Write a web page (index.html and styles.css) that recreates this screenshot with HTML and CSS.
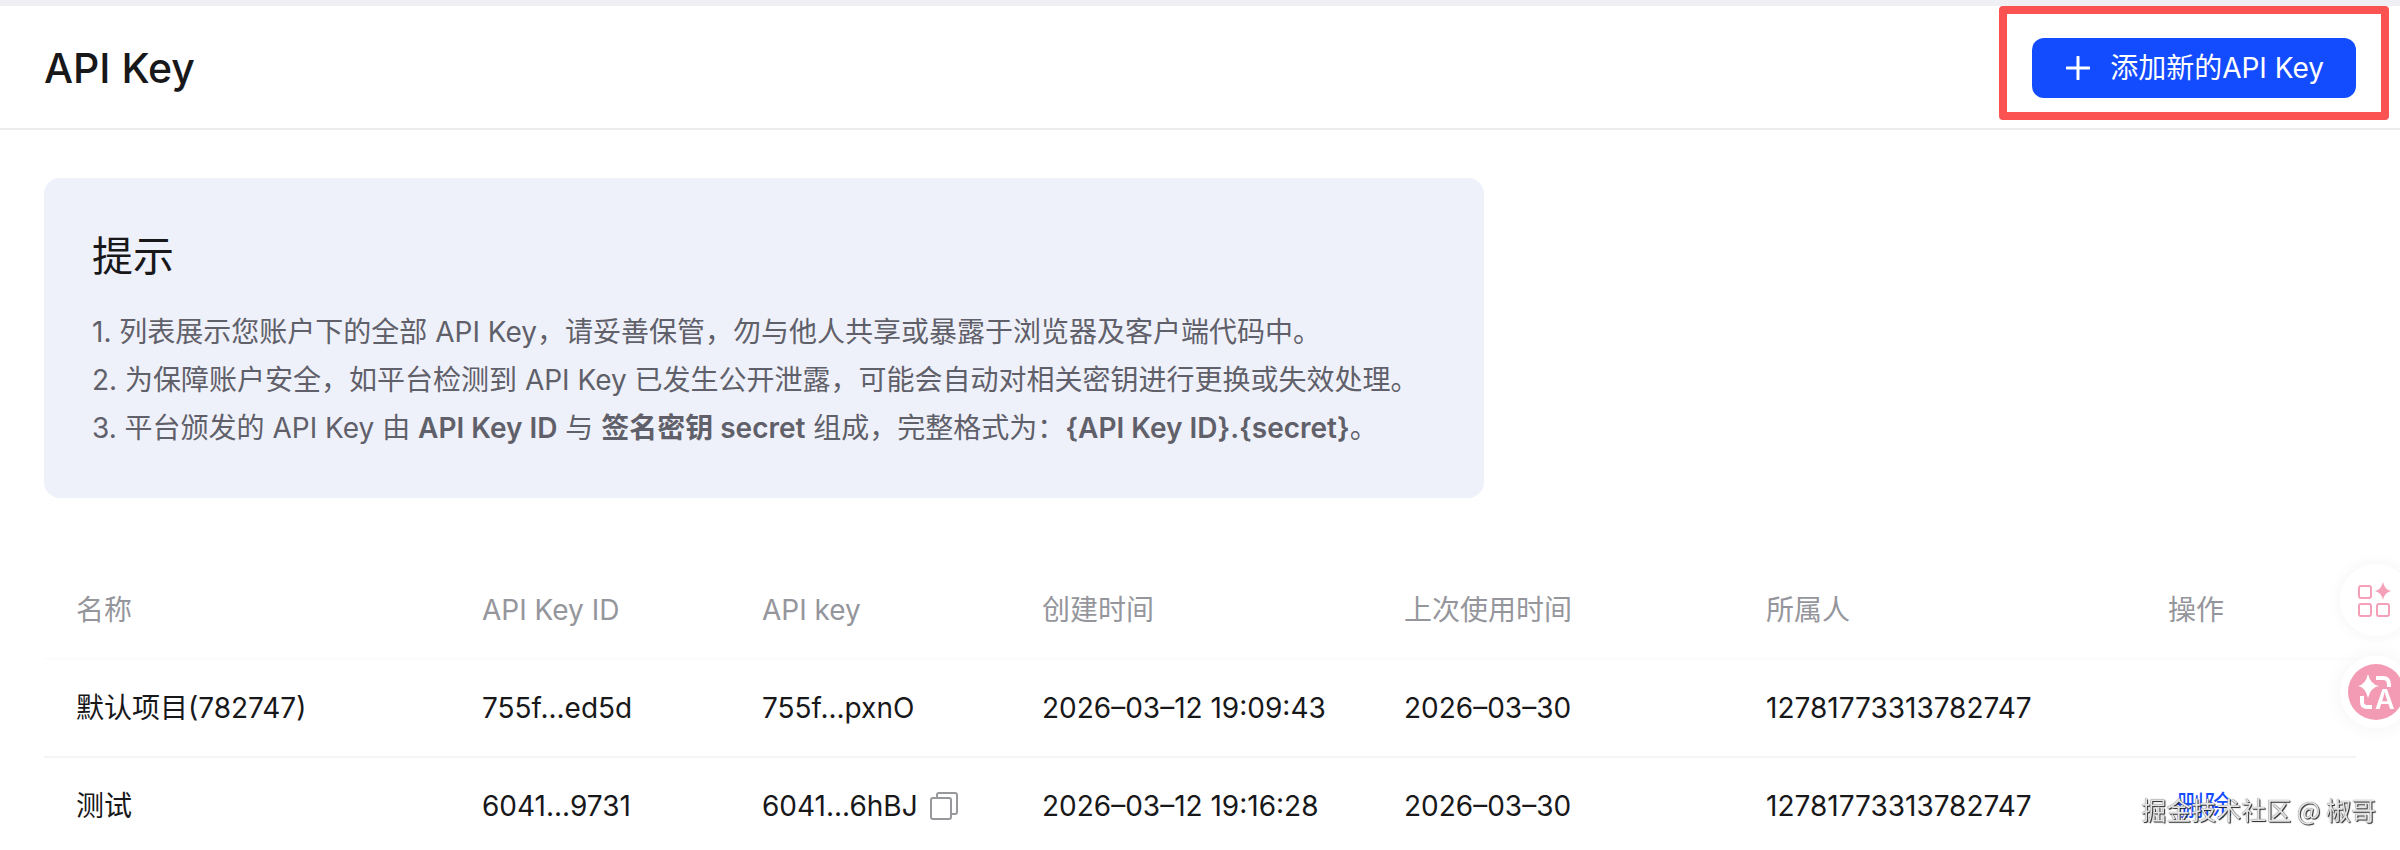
FILE: index.html
```html
<!DOCTYPE html>
<html lang="zh-CN">
<head>
  <meta charset="UTF-8">
  <meta name="viewport" content="width=device-width, initial-scale=1.0">
  <title>API Key</title>
  <link rel="stylesheet" href="styles.css">
</head>
<body>
  <header class="header">
    <h1>API Key</h1>
    <div class="highlight">
      <button type="button" class="btn">
        <svg class="plus" viewBox="0 0 24 24" aria-hidden="true"><path d="M12 1v22M1 12h22"/></svg>
        添加新的API Key
      </button>
    </div>
  </header>

  <main class="content">
    <section class="tips">
      <h2>提示</h2>
      <p>1. 列表展示您账户下的全部 API Key，请妥善保管，勿与他人共享或暴露于浏览器及客户端代码中。</p>
      <p>2. 为保障账户安全，如平台检测到 API Key 已发生公开泄露，可能会自动对相关密钥进行更换或失效处理。</p>
      <p>3. 平台颁发的 API Key 由 <b>API Key ID</b> 与 <b>签名密钥 secret</b> 组成，完整格式为：<b>{API Key ID}.{secret}</b>。</p>
    </section>

    <table class="keys">
      <colgroup>
        <col class="col-name">
        <col class="col-key">
        <col class="col-key">
        <col class="col-time">
        <col class="col-time">
        <col class="col-owner">
        <col class="col-action">
      </colgroup>
      <thead>
        <tr>
          <th>名称</th>
          <th>API Key ID</th>
          <th>API key</th>
          <th>创建时间</th>
          <th>上次使用时间</th>
          <th>所属人</th>
          <th>操作</th>
        </tr>
      </thead>
      <tbody>
        <tr>
          <td>默认项目(782747)</td>
          <td>755f...ed5d</td>
          <td>755f...pxnO</td>
          <td>2026–03–12 19:09:43</td>
          <td>2026–03–30</td>
          <td>12781773313782747</td>
          <td></td>
        </tr>
        <tr>
          <td>测试</td>
          <td>6041...9731</td>
          <td>
            <div class="key">
              6041...6hBJ
              <button type="button" class="copy" aria-label="复制">
                <svg viewBox="0 0 28 28" aria-hidden="true"><path d="M7 6V3a2 2 0 0 1 2-2h16a2 2 0 0 1 2 2v17a2 2 0 0 1-2 2h-3"/><rect x="1" y="6" width="20" height="21" rx="2"/></svg>
              </button>
            </div>
          </td>
          <td>2026–03–12 19:16:28</td>
          <td>2026–03–30</td>
          <td>12781773313782747</td>
          <td><a href="#" class="delete">删除</a></td>
        </tr>
      </tbody>
    </table>
  </main>

  <!-- 右侧悬浮按钮 -->
  <div class="float">
    <button type="button" class="float-apps" aria-label="工具">
      <svg viewBox="0 0 34 36" aria-hidden="true">
        <g fill="none" stroke="#f3a0b8" stroke-width="2">
          <rect x="2" y="4" width="12" height="12" rx="2"/>
          <rect x="2" y="22" width="12" height="12" rx="2"/>
          <rect x="20" y="22" width="12" height="12" rx="2"/>
        </g>
        <path fill="#f3a0b8" d="M26 0Q27.500 7.500 34 9Q27.500 10.500 26 18Q24.500 10.500 18 9Q24.500 7.500 26 0Z"/>
      </svg>
    </button>
    <button type="button" class="float-translate" aria-label="翻译">
      <svg viewBox="0 0 56 56" aria-hidden="true">
        <path fill="#fff" d="M20 10Q22.500 20.500 31 22Q22.500 23.500 20 34Q17.500 23.500 10 22Q17.500 20.500 20 10Z"/>
        <path fill="none" stroke="#fff" stroke-width="4" d="M28 14h7q6 0 6 7v2M14 32v6q0 5 5 5h5"/>
        <text x="27" y="45" fill="#fff" font-size="27" font-weight="600">A</text>
      </svg>
    </button>
  </div>

  <div class="watermark">掘金技术社区 @ 椒哥</div>
</body>
</html>
```

FILE: styles.css
```css
* {
  box-sizing: border-box;
}
body {
  margin: 0;
  font-family: Inter, 'Noto Sans CJK SC', sans-serif;
  font-size: 28px;
  line-height: 48px;
  color: #18181a;
  background: #fff;
  overflow: hidden;
}
h1, h2, p {
  margin: 0;
}
button {
  padding: 0;
  border: none;
  font: inherit;
  cursor: pointer;
}
svg {
  display: block;
}
.header {
  display: flex;
  justify-content: space-between;
  align-items: flex-start;
  height: 130px;
  padding: 0 11px 0 44px;
  border-top: 6px solid #f0f0f4;
  border-bottom: 2px solid #ececee;
}
.header h1 {
  padding-top: 38px;
  font-size: 41px;
  font-weight: 500;
}
.highlight {
  padding: 24px 25px 14px;
  border: 8px solid #fb5252;
  border-radius: 4px;
}
.btn {
  display: flex;
  align-items: center;
  gap: 20px;
  height: 60px;
  padding: 0 32px 0 34px;
  border-radius: 12px;
  background: #134cff;
  color: #fff;
}
.plus {
  width: 24px;
  height: 24px;
  stroke: #fff;
  stroke-width: 3;
  stroke-linecap: round;
}
.content {
  padding: 48px 44px 0;
}
.tips {
  max-width: 1440px;
  padding: 50px 48px 46px;
  border-radius: 16px;
  background: #eff1fa;
  color: #5f6069;
}
.tips h2 {
  margin-bottom: 24px;
  font-size: 41px;
  line-height: 56px;
  font-weight: 400;
  color: #18181a;
}
.tips b {
  font-weight: 600;
}
.keys {
  width: 100%;
  margin-top: 64px;
  table-layout: fixed;
  border-collapse: separate;
  border-spacing: 0;
}
.col-name {
  width: 406px;
}
.col-key {
  width: 280px;
}
.col-time {
  width: 362px;
}
.col-owner {
  width: 402px;
}
.col-action {
  width: 220px;
}
.keys th, .keys td {
  padding: 24px 0 24px 32px;
  border-bottom: 2px solid #f4f4f6;
  font-weight: 400;
  text-align: left;
  white-space: nowrap;
}
.keys th {
  border-bottom-color: #fcfcfd;
  color: #95969c;
}
.key {
  display: flex;
  align-items: center;
  gap: 12px;
}
.copy {
  background: none;
}
.copy svg {
  width: 28px;
  height: 28px;
  fill: none;
  stroke: #97989c;
  stroke-width: 2;
}
.delete {
  padding-left: 8px;
  color: #134cff;
  text-decoration: none;
}
.float {
  position: fixed;
  top: 564px;
  right: -12px;
  display: flex;
  flex-direction: column;
  align-items: center;
  gap: 28px;
}
.float button {
  display: flex;
  align-items: center;
  justify-content: center;
  border-radius: 50%;
}
.float-apps {
  width: 72px;
  height: 72px;
  background: #fff;
  box-shadow: 0 0 16px rgba(0, 0, 0, 0.05);
}
.float-apps svg {
  width: 34px;
  height: 36px;
  margin-right: 4px;
}
.float-translate {
  width: 56px;
  height: 56px;
  background: #f39ab4;
  box-shadow: 0 0 0 8px #fff, 0 0 20px 8px rgba(0, 0, 0, 0.05);
}
.float-translate svg {
  width: 56px;
  height: 56px;
}
.watermark {
  position: fixed;
  right: 24px;
  bottom: 17px;
  font-family: 'Noto Sans CJK SC', sans-serif;
  font-size: 25px;
  color: #e4e4e4;
  text-shadow: 1px 1px 1px #222, 0 0 1px #444;
}
```
